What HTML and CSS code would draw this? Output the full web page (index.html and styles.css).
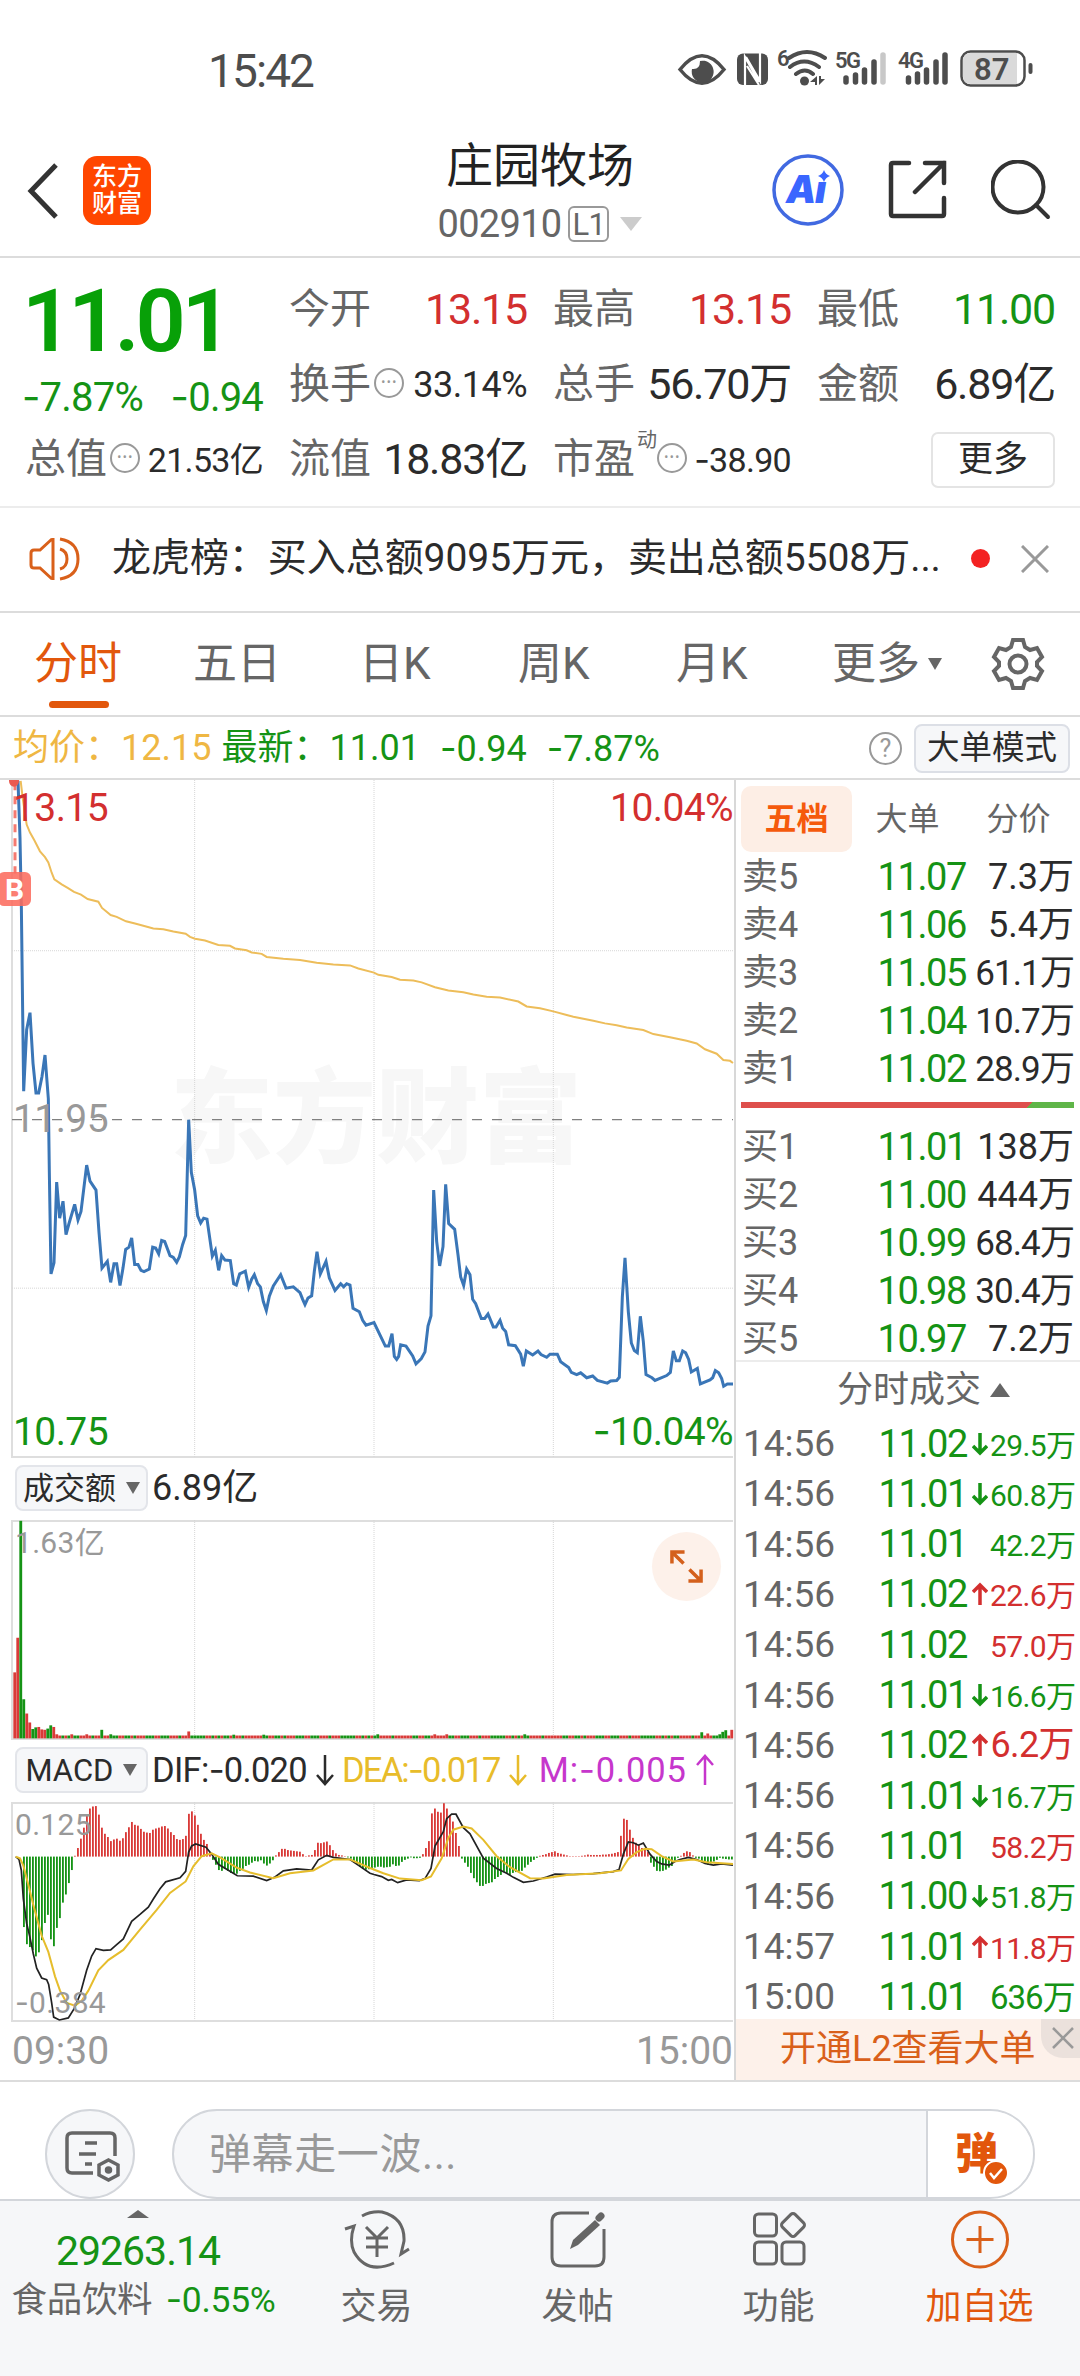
FILE: index.html
```
<!DOCTYPE html>
<html lang="zh-CN">
<head>
  <meta charset="UTF-8">
  <meta name="viewport" content="width=device-width, initial-scale=1.0">
  <title>庄园牧场 002910</title>
  <link rel="stylesheet" href="styles.css">
</head>
<body>
  <!-- Status bar -->
  <div class="status-bar">
    <span class="clock">15:42</span>
    <svg class="status-icons" viewBox="0 0 360 44">
      <path d="M5 21.500Q27 -6 49 21.500Q27 49 5 21.500Z" fill="none" stroke="#4d4d4d" stroke-width="3.500"/>
      <path d="M25 13a11 11 0 1 1-8 8q8 1 8-8Z" fill="#4d4d4d"/>
      <rect x="62" y="5.500" width="31" height="31.500" rx="6" fill="#4d4d4d"/>
      <path d="M70 37V9l14 25M85 5v28L71 9M72 18l12 19" fill="none" stroke="#fff" stroke-width="2.200"/>
      <text x="102" y="18" class="tiny">6</text>
      <path d="M114 10q18-12 36 0M115 19q14-11 29 0M121 26q9-7 17 0" fill="none" stroke="#4d4d4d" stroke-width="4" stroke-linecap="round"/>
      <circle cx="129.500" cy="33" r="4.500" fill="#4d4d4d"/>
      <path d="M135 34l7-6v9h-2v-3zM150 31l-6 6v-9h2v3z" fill="#4d4d4d"/>
      <text x="160" y="20" class="tiny">5G</text>
      <path d="M171 30v4M180.500 27v7M189.500 22v12M199 14v20" class="bars"/>
      <path d="M208 7v27" class="bars off"/>
      <text x="223" y="20" class="tiny">4G</text>
      <path d="M233.500 30v4M242.500 26v8M251.500 22v12M261 14v20M270 7v27" class="bars"/>
      <rect x="286.500" y="3.500" width="63" height="34" rx="9" fill="#fff" stroke="#4d4d4d" stroke-width="2.500"/>
      <path d="M296 5h46v31h-46q-8 0-8-8V13q0-8 8-8Z" fill="#dadada"/>
      <path d="M355.500 17v7" stroke="#4d4d4d" stroke-width="4" stroke-linecap="round"/>
      <text x="299" y="32" class="battery">87</text>
    </svg>
  </div>

  <!-- Header -->
  <header class="header">
    <div class="header-left">
      <svg class="back" viewBox="0 0 32 56"><path d="M29 2L4 28L29 54"/></svg>
      <div class="logo">东方<br>财富</div>
    </div>
    <div class="header-title">
      <h1>庄园牧场</h1>
      <div class="code">002910<span class="level">L1</span><i class="tri-down"></i></div>
    </div>
    <div class="header-right">
      <svg class="ai" viewBox="0 0 72 72">
        <circle cx="36" cy="36" r="34" fill="none" stroke="#4169e1" stroke-width="3.500"/>
        <text x="14" y="49">A</text>
        <text x="43" y="49">ı</text>
        <path d="M52 16q1.500 4.500 6 6q-4.500 1.500-6 6q-1.500-4.500-6-6q4.500-1.500 6-6Z" fill="#3a66ff"/>
      </svg>
      <svg class="share" viewBox="0 0 60 60"><path d="M21 3H5Q3 3 3 5V54Q3 56 5 56H54Q56 56 56 54V38M37 3H56V23M56 3L27 32"/></svg>
      <svg class="search" viewBox="0 0 60 60"><circle cx="27" cy="27" r="25.500"/><path d="M45 45L57 57"/></svg>
    </div>
  </header>

  <!-- Quote summary -->
  <section class="quote">
    <div class="quote-col">
      <div class="price">11.01</div>
      <div class="change"><span><i class="neg">-</i>7.87%</span><span><i class="neg">-</i>0.94</span></div>
      <div class="stat"><label>总值</label><i class="dots">•••</i><b class="small">21.53亿</b></div>
    </div>
    <div class="quote-col">
      <div class="stat"><label>今开</label><b class="red">13.15</b></div>
      <div class="stat"><label>换手</label><i class="dots">•••</i><b class="mid">33.14%</b></div>
      <div class="stat"><label>流值</label><b>18.83亿</b></div>
    </div>
    <div class="quote-col">
      <div class="stat"><label>最高</label><b class="red">13.15</b></div>
      <div class="stat"><label>总手</label><b>56.70万</b></div>
      <div class="stat"><label>市盈</label><sup>动</sup><i class="dots">•••</i><b class="small"><i class="neg">-</i>38.90</b></div>
    </div>
    <div class="quote-col">
      <div class="stat"><label>最低</label><b class="green">11.00</b></div>
      <div class="stat"><label>金额</label><b>6.89亿</b></div>
      <div class="stat"><button class="more-btn">更多</button></div>
    </div>
  </section>

  <!-- News line -->
  <section class="news">
    <svg class="speaker" viewBox="0 0 52 46"><path d="M24 2v42M23 3L11 14H5Q2 14 2 17v12q0 3 3 3h6l12 11M31 13q7 2 7 10t-7 10M31 3q18 3 18 20t-18 20"/></svg>
    <span class="news-text">龙虎榜：买入总额9095万元，卖出总额5508万...</span>
    <i class="red-dot"></i>
    <svg class="news-close" viewBox="0 0 28 28"><path d="M1 1l26 26M27 1L1 27"/></svg>
  </section>

  <!-- Period tabs -->
  <nav class="tabs">
    <a class="tab active">分时</a>
    <a class="tab">五日</a>
    <a class="tab">日K</a>
    <a class="tab">周K</a>
    <a class="tab">月K</a>
    <a class="tab more">更多<i class="tri-down"></i></a>
    <svg class="gear" viewBox="0 0 54 54">
      <path d="M22 3h10l2 7 5 3 7-2 5 9-5 5v4l5 5-5 9-7-2-5 3-2 7H22l-2-7-5-3-7 2-5-9 5-5v-4l-5-5 5-9 7 2 5-3Z"/>
      <circle cx="27" cy="27" r="8.500"/>
    </svg>
  </nav>

  <div class="info-row">
    <span class="avg">均价：12.15</span>
    <span class="last">最新：11.01</span>
    <span class="last"><i class="neg">-</i>0.94</span>
    <span class="last"><i class="neg">-</i>7.87%</span>
    <i class="help">?</i>
    <button class="mode-btn">大单模式</button>
  </div>

  <main class="main">
    <div class="charts">
      <!-- Price chart -->
      <div class="chart price-chart">
        <div class="watermark">东方财富</div>
        <svg viewBox="0 20 2202 1521" preserveAspectRatio="none">
          <path class="grid" d="M36 403H2199M36 1160H2199M584 20V1540M1122 20V1540M1660 20V1540"/>
          <path class="prev-close" d="M36 782H2199"/>
          <path class="buy-line" d="M45 25V230"/>
          <polyline class="avg-line" points="62,22 68,60 80,120 90,138 103,155 120,180 135,193 145,205 155,228 163,243 185,254 203,262 222,271 243,277 263,287 295,293 306,307 332,323 350,327 378,337 405,342 430,347 460,353 490,355 520,360 557,365 570,372 585,376 615,380 655,390 690,392 705,398 740,402 755,407 785,410 800,417 850,421 900,424 950,430 1000,434 1050,436 1075,443 1122,452 1135,457 1175,462 1200,468 1240,470 1265,474 1305,485 1345,492 1390,496 1420,501 1460,506 1500,508 1555,517 1580,528 1620,532 1660,539 1700,547 1720,551 1780,560 1815,566 1850,570 1880,575 1930,581 1960,590 2010,597 2060,605 2090,611 2115,624 2150,634 2170,648 2190,650 2199,655"/>
          <polyline class="price-line" points="54,22 60,150 64,300 71,718 80,580 90,542 99,655 108,722 116,722 126,685 135,637 145,735 148,900 153,1128 162,1103 170,922 179,1003 189,965 198,1040 207,1015 224,972 234,1007 243,988 260,884 270,920 288,940 297,1035 306,1115 322,1100 332,1147 342,1105 350,1105 360,1154 369,1115 377,1073 387,1068 395,1047 404,1107 414,1107 423,1120 432,1123 448,1117 458,1068 467,1070 476,1083 485,1053 494,1055 510,1087 520,1091 530,1102 538,1090 548,1062 557,1042 566,782 574,900 584,940 593,998 602,1014 611,1003 621,1005 637,1088 646,1075 656,1120 665,1087 675,1097 691,1098 701,1150 709,1153 719,1128 736,1122 746,1158 755,1140 763,1130 773,1150 781,1157 790,1190 799,1210 808,1178 820,1155 842,1130 858,1160 880,1157 900,1170 908,1185 915,1197 924,1182 935,1177 943,1122 951,1078 961,1128 978,1100 988,1137 1005,1165 1022,1150 1031,1157 1040,1150 1050,1153 1059,1205 1078,1213 1088,1232 1098,1243 1122,1237 1138,1262 1156,1290 1166,1290 1176,1262 1183,1313 1190,1320 1196,1313 1202,1287 1218,1290 1238,1312 1248,1330 1264,1318 1275,1303 1284,1245 1293,1222 1301,940 1310,1055 1319,1110 1329,1067 1337,927 1346,1015 1364,1028 1374,1085 1382,1135 1391,1154 1400,1117 1410,1130 1418,1185 1427,1195 1444,1228 1454,1228 1464,1218 1480,1247 1488,1247 1500,1232 1508,1250 1517,1257 1526,1287 1546,1289 1562,1308 1570,1335 1579,1301 1598,1310 1614,1301 1623,1309 1640,1315 1650,1308 1672,1308 1682,1325 1706,1338 1714,1349 1730,1354 1742,1350 1760,1361 1778,1357 1792,1367 1822,1373 1832,1368 1850,1367 1858,1360 1867,1180 1875,1092 1885,1213 1894,1283 1903,1300 1912,1305 1921,1223 1930,1280 1938,1354 1956,1361 1965,1367 2000,1356 2011,1349 2020,1301 2029,1323 2038,1323 2048,1301 2057,1305 2066,1320 2074,1348 2092,1340 2101,1375 2130,1366 2138,1361 2146,1345 2156,1350 2165,1363 2171,1380 2182,1375 2199,1375"/>
          <ellipse cx="42" cy="22" rx="15" ry="13" fill="#ea5a50"/>
        </svg>
        <span class="buy-mark">B</span>
        <span class="axis high red">13.15</span>
        <span class="axis high right red">10.04%</span>
        <span class="axis middle">11.95</span>
        <span class="axis low green">10.75</span>
        <span class="axis low right green"><i class="neg">-</i>10.04%</span>
      </div>

      <div class="indicator">
        <button class="chip">成交额<i class="tri-down"></i></button>
        <span class="turnover">6.89亿</span>
      </div>

      <!-- Turnover bars -->
      <div class="chart sub-chart">
        <svg viewBox="0 172 2202 540" preserveAspectRatio="none">
          <path class="grid" d="M584 172V708M1122 172V708M1660 172V708"/>
          <g id="volume"></g>
        </svg>
        <span class="sub-axis sub-high">1.63亿</span>
        <div class="expand">
          <svg viewBox="0 0 34 34"><path d="M2 14V2H15M2 2L14 14M32 20V32H19M32 32L20 20"/></svg>
        </div>
      </div>

      <div class="indicator">
        <button class="chip">MACD<i class="tri-down"></i></button>
        <span class="dif">DIF:<i class="neg">-</i>0.020<svg class="arrow" viewBox="0 0 18 32"><path d="M9 1v29M1 21l8 9 8-9"/></svg></span>
        <span class="dea">DEA:<i class="neg">-</i>0.017<svg class="arrow" viewBox="0 0 18 32"><path d="M9 1v29M1 21l8 9 8-9"/></svg></span>
        <span class="macd">M:<i class="neg">-</i>0.005<svg class="arrow" viewBox="0 0 18 32"><path d="M9 31V2M1 11l8-9 8 9"/></svg></span>
      </div>

      <!-- MACD -->
      <div class="chart sub-chart">
        <svg viewBox="0 862 2202 540" preserveAspectRatio="none">
          <path class="grid" d="M584 862V1398M1122 862V1398M1660 862V1398"/>
          <g id="macd"></g>
          <polyline class="dif-line" points="47,996 57,1003 64,1030 70,1100 80,1160 90,1195 100,1235 110,1270 125,1294 140,1298 146,1310 155,1355 161,1390 178,1397 205,1392 222,1370 240,1335 260,1275 275,1240 288,1222 310,1226 332,1225 350,1212 370,1198 395,1155 420,1138 445,1120 460,1100 480,1075 497,1058 540,1048 557,1032 566,985 575,970 587,965 618,973 635,990 655,1015 690,1032 712,1043 760,1044 800,1055 825,1046 850,1031 890,1026 935,1029 955,1004 980,993 1000,998 1050,1003 1080,1020 1110,1037 1122,1040 1145,1045 1165,1054 1175,1052 1193,1060 1220,1053 1258,1055 1275,1050 1293,1025 1305,970 1330,935 1340,903 1355,892 1368,892 1390,925 1410,940 1450,1000 1490,1025 1520,1037 1540,1047 1570,1059 1600,1056 1640,1046 1665,1039 1720,1040 1780,1038 1840,1033 1857,1028 1870,990 1885,960 1900,962 1915,968 1930,963 1950,990 1970,1008 1985,1014 2008,1017 2025,1008 2040,1003 2065,998 2090,1003 2115,1013 2140,1017 2165,1014 2199,1017"/>
          <polyline class="dea-line" points="47,996 60,1000 70,1018 85,1065 100,1115 125,1190 145,1230 165,1290 180,1325 200,1355 225,1362 245,1350 265,1325 295,1275 325,1250 370,1225 420,1175 470,1127 510,1085 557,1057 580,1020 605,995 635,988 660,998 710,1023 750,1035 820,1049 870,1037 940,1030 1000,1003 1050,1003 1110,1024 1150,1037 1200,1050 1265,1054 1293,1045 1325,1000 1345,950 1360,930 1390,922 1415,927 1450,955 1490,995 1530,1022 1590,1049 1630,1050 1700,1041 1800,1037 1863,1030 1885,1002 1910,985 1935,977 1955,978 1985,995 2020,1008 2080,1003 2120,1010 2199,1014"/>
        </svg>
        <span class="sub-axis sub-high">0.125</span>
        <span class="sub-axis sub-low"><i class="neg">-</i>0.384</span>
      </div>
      <div class="time-axis"><span>09:30</span><span>15:00</span></div>
    </div>

    <!-- Order book -->
    <aside class="side">
      <div class="side-tabs"><a class="active">五档</a><a>大单</a><a>分价</a></div>
      <div class="book">
        <div class="row"><span>卖5</span><em>11.07</em><b>7.3万</b></div>
        <div class="row"><span>卖4</span><em>11.06</em><b>5.4万</b></div>
        <div class="row"><span>卖3</span><em>11.05</em><b class="long">61.1万</b></div>
        <div class="row"><span>卖2</span><em>11.04</em><b class="long">10.7万</b></div>
        <div class="row"><span>卖1</span><em>11.02</em><b class="long">28.9万</b></div>
      </div>
      <div class="ratio"></div>
      <div class="book">
        <div class="row"><span>买1</span><em>11.01</em><b>138万</b></div>
        <div class="row"><span>买2</span><em>11.00</em><b>444万</b></div>
        <div class="row"><span>买3</span><em>10.99</em><b class="long">68.4万</b></div>
        <div class="row"><span>买4</span><em>10.98</em><b class="long">30.4万</b></div>
        <div class="row"><span>买5</span><em>10.97</em><b>7.2万</b></div>
      </div>
      <div class="ticks-title">分时成交<i class="tri-up"></i></div>
      <div class="ticks" id="ticks"></div>
      <div class="promo">开通L2查看大单
        <span class="promo-close"><svg viewBox="0 0 22 22"><path d="M1 1l20 20M21 1L1 21"/></svg></span>
      </div>
    </aside>
  </main>

  <!-- Comment bar -->
  <div class="comment">
    <div class="comment-set">
      <svg viewBox="0 0 56 52">
        <path d="M50 25V7Q50 2 45 2H7Q2 2 2 7V37Q2 42 7 42H28M20 12h12M14 23h17M20 33h7"/>
        <path d="M43.500 29l9.500 5v10l-9.500 5-9.500-5V34Z"/><circle cx="43.500" cy="39" r="2" fill="#666"/>
      </svg>
    </div>
    <div class="comment-input">
      <span class="placeholder">弹幕走一波...</span>
      <span class="danmu">弹<svg viewBox="0 0 26 26"><circle cx="13" cy="13" r="12" fill="#e2570c" stroke="#fff" stroke-width="2"/><path d="M7 13l4 5 8-9" fill="none" stroke="#fff" stroke-width="2.500"/></svg></span>
    </div>
  </div>

  <!-- Bottom nav -->
  <footer class="bottom">
    <div class="index">
      <i class="tri-up"></i>
      <div class="index-value">29263.14</div>
      <div class="index-name"><span>食品饮料</span><span class="green"><i class="neg">-</i>0.55%</span></div>
    </div>
    <a class="nav-item">
      <svg viewBox="0 0 66 62"><path d="M18 7Q27 2 38 3Q61 9 60 32L57 45L65 40M1 20L10 17Q5 32 10 43Q23 66 50 54"/><path d="M22 18l11 11 11-11M33 29v19M22 29h22M22 38h22"/></svg>
      交易
    </a>
    <a class="nav-item">
      <svg viewBox="0 0 66 62"><path d="M44 4H16Q7 4 7 13V48Q7 57 16 57H50Q59 57 59 48V20"/><path d="M25 40l3-9 22-20 5 5-22 20Z" fill="#666" stroke="none"/><path d="M54 9l2-2" stroke-width="7" stroke-linecap="round"/></svg>
      发帖
    </a>
    <a class="nav-item">
      <svg viewBox="0 0 66 62"><rect x="8.500" y="5" width="22" height="22" rx="4"/><rect x="8.500" y="33" width="22" height="22" rx="4"/><rect x="36" y="33" width="22" height="22" rx="4"/><rect x="38" y="7" width="18" height="18" rx="3" transform="rotate(45 47 16)"/></svg>
      功能
    </a>
    <a class="nav-item add">
      <svg viewBox="0 0 66 62"><circle cx="33" cy="30.500" r="27.500"/><path d="M33 17v27M19.500 30.500h27"/></svg>
      加自选
    </a>
  </footer>
  <script src="script.js"></script>
</body>
</html>
```
FILE: styles.css
```
* {
  box-sizing: border-box;
}

body {
  margin: 0;
  width: 1080px;
  height: 2376px;
  overflow: hidden;
  background: #fff;
  color: #2b2b2b;
  font-family: Roboto, "Noto Sans CJK SC", sans-serif;
  line-height: 1;
}

button {
  font-family: inherit;
  color: inherit;
  padding: 0;
  line-height: 1;
}

i, em {
  font-style: normal;
}

b {
  font-weight: 400;
}

svg {
  display: block;
  flex: none;
}

.red {
  color: #d32f2f;
}

.green {
  color: #159315;
}

/* wider minus sign */
.neg {
  font-family: Inter, sans-serif;
}

.tri-down, .tri-up {
  display: inline-block;
  border: 7px solid transparent;
}

.tri-down {
  border-top: 12px solid #666;
  border-bottom: 0;
}

.tri-up {
  border-bottom: 12px solid #666;
  border-top: 0;
}

/* Status bar */
.status-bar {
  display: flex;
  justify-content: space-between;
  height: 132px;
  padding: 48px 45px 0 208px;
}

.clock {
  font-size: 46px;
  letter-spacing: -1.9px;
  color: #4d4d4d;
}

.status-icons {
  width: 360px;
  height: 44px;
}

.tiny {
  font-size: 22px;
  font-weight: 600;
  fill: #4d4d4d;
  letter-spacing: -1.5px;
}

.battery {
  font-size: 31px;
  font-weight: 600;
  fill: #4d4d4d;
}

.bars {
  stroke: #4d4d4d;
  stroke-width: 5.5;
  stroke-linecap: round;
}

.bars.off {
  stroke: #c8c8c8;
}

/* Header */
.header {
  display: grid;
  grid-template-columns: 300px 1fr 300px;
  height: 126px;
  border-bottom: 2px solid #dcdcdc;
}

.header-left {
  display: flex;
  align-items: center;
  padding: 0 0 7px 27px;
  gap: 24px;
}

.back {
  width: 32px;
  height: 56px;
  fill: none;
  stroke: #333;
  stroke-width: 5;
}

.logo {
  width: 68px;
  height: 69px;
  padding-top: 7px;
  border-radius: 14px;
  background: #ff4600;
  color: #fff;
  font-size: 25px;
  font-weight: 500;
  line-height: 27px;
  text-align: center;
}

.header-title {
  display: flex;
  flex-direction: column;
  align-items: center;
}

.header-title h1 {
  margin: 9px 0 14px;
  font-size: 47px;
  line-height: 50px;
  font-weight: 400;
  color: #222;
}

.code {
  display: flex;
  align-items: center;
  font-size: 38px;
  letter-spacing: -0.7px;
  color: #666;
}

.level {
  width: 41px;
  height: 36px;
  margin: 0 11px 0 7px;
  border: 2px solid #999;
  border-radius: 6px;
  font-size: 31px;
  line-height: 33px;
  text-align: center;
}

.code .tri-down {
  border-width: 14px 11px 0;
  border-top-color: #ccc;
}

.header-right {
  display: flex;
  align-items: center;
  padding: 0 0 8px;
}

.ai {
  width: 72px;
  height: 72px;
  margin: 0 44px 0 -8px;
}

.ai text {
  font-family: Inter;
  font-size: 38px;
  font-weight: 900;
  font-style: italic;
  fill: #3a66ff;
}

.share, .search {
  width: 60px;
  height: 60px;
  fill: none;
  stroke: #333;
  stroke-width: 4.5;
  stroke-linecap: round;
}

.share {
  margin-right: 43px;
}

.search {
  stroke-width: 4;
}

/* Quote summary */
.quote {
  display: grid;
  grid-template-columns: repeat(4, 238px);
  gap: 26px;
  height: 250px;
  padding: 14px 25px 0;
  border-bottom: 2px solid #ececec;
}

.price {
  height: 100px;
  margin-left: -3px;
  color: #08a008;
  font-size: 88px;
  line-height: 98px;
  font-weight: 600;
  letter-spacing: -4px;
}

.change {
  display: flex;
  justify-content: space-between;
  height: 50px;
  margin-left: -3px;
  color: #159315;
  font-size: 40px;
  line-height: 50px;
  letter-spacing: -0.8px;
}

.stat {
  display: flex;
  align-items: center;
  height: 75px;
  white-space: nowrap;
}

.stat label {
  font-size: 41px;
  color: #666;
}

.stat b {
  margin-left: auto;
  font-size: 43px;
  letter-spacing: -1.2px;
}

.stat .mid {
  font-size: 36px;
  letter-spacing: -0.5px;
}

.stat .small {
  font-size: 34px;
  letter-spacing: -0.7px;
}

.stat sup {
  align-self: flex-start;
  margin: 8px 0 0 2px;
  font-size: 20px;
  color: #666;
}

.dots {
  width: 30px;
  height: 30px;
  margin: -4px 0 0 3px;
  border: 2px solid #999;
  border-radius: 50%;
  color: #999;
  font-size: 12px;
  line-height: 25px;
  letter-spacing: 1.5px;
  text-indent: 1px;
  text-align: center;
}

.stat sup + .dots {
  margin-left: 0;
}

.more-btn {
  width: 124px;
  height: 56px;
  margin-left: auto;
  border: 2px solid #e4e4e4;
  border-radius: 7px;
  background: #fff;
  font-size: 35px;
}

/* News */
.news {
  display: flex;
  align-items: center;
  height: 105px;
  padding: 0 31px 2px 29px;
  border-bottom: 2px solid #dcdcdc;
}

.speaker {
  width: 52px;
  height: 46px;
  fill: none;
  stroke: #d9601a;
  stroke-width: 3;
}

.news-text {
  width: 828px;
  margin-left: 31px;
  font-size: 39px;
  letter-spacing: -0.05px;
  white-space: nowrap;
}

.red-dot {
  width: 19px;
  height: 19px;
  margin-left: 31px;
  border-radius: 50%;
  background: #f32222;
}

.news-close {
  width: 28px;
  height: 28px;
  margin-left: auto;
  stroke: #999;
  stroke-width: 3;
}

/* Tabs */
.tabs {
  display: grid;
  grid-template-columns: 159px 166px 159px 158px 156px 1fr 54px;
  align-items: center;
  height: 104px;
  padding: 0 35px 0 34px;
  border-bottom: 2px solid #dcdcdc;
  font-size: 44px;
  color: #666;
}

.tab {
  position: relative;
  line-height: 102px;
}

.tab.active {
  color: #e2570c;
}

.tab.active::after {
  content: "";
  position: absolute;
  left: 15px;
  bottom: 7px;
  width: 60px;
  height: 7px;
  border-radius: 4px;
  background: #e2570c;
}

.tab.more {
  display: flex;
  align-items: center;
}

.tab .tri-down {
  margin-left: 8px;
}

.gear {
  width: 54px;
  height: 54px;
  fill: none;
  stroke: #666;
  stroke-width: 4;
}

/* Average / last price */
.info-row {
  display: flex;
  align-items: center;
  height: 61px;
  padding: 1px 10px 0 13px;
  font-size: 36px;
  letter-spacing: 0;
  white-space: nowrap;
}

.info-row span {
  margin-right: 20px;
}

.avg {
  color: #efb743;
}

.info-row .avg {
  margin-right: 10px;
}

.last {
  color: #159315;
}

.help {
  width: 33px;
  height: 33px;
  margin: 0 12px 0 auto;
  border: 2.5px solid #999;
  border-radius: 50%;
  font-size: 25px;
  line-height: 29px;
  text-align: center;
  color: #999;
}

.mode-btn {
  width: 156px;
  height: 49px;
  border: 2px solid #dcdfe6;
  border-radius: 8px;
  background: #f6f7f9;
  font-size: 32.5px;
}

/* Main */
.main {
  display: flex;
  height: 1304px;
  border-top: 2px solid #dcdcdc;
  border-bottom: 2px solid #dcdcdc;
}

.charts {
  width: 736px;
  border-right: 2px solid #d8d8d8;
}

.chart {
  position: relative;
}

.chart svg {
  position: relative;
  width: 734px;
  height: 100%;
}

.chart::before {
  content: "";
  position: absolute;
  inset: 0 1px 0 11px;
  border: 2px solid #dedede;
  border-right: 0;
}

.price-chart {
  height: 678px;
}

.price-chart::before {
  border-top: 0;
}

.sub-chart {
  height: 220px;
}

.chart polyline, .chart path {
  fill: none;
  vector-effect: non-scaling-stroke;
}

.chart .grid {
  stroke: #d6d6d6;
  stroke-width: 1;
  stroke-dasharray: 1 1;
}

.chart .prev-close {
  stroke: #808080;
  stroke-width: 1.4;
  stroke-dasharray: 10 10;
}

.chart .buy-line {
  stroke: #f57a70;
  stroke-width: 3;
  stroke-dasharray: 8 6;
}

.chart .avg-line {
  stroke: #edbd5a;
  stroke-width: 2;
}

.chart .price-line {
  stroke: #3a76b7;
  stroke-width: 3;
}

.chart .dif-line {
  stroke: #222;
  stroke-width: 1.7;
}

.chart .dea-line {
  stroke: #e6bd2c;
  stroke-width: 2;
}

.watermark {
  position: absolute;
  top: 288px;
  left: 170px;
  color: #f7f7f7;
  font-size: 103px;
  font-weight: 900;
}

.buy-mark {
  position: absolute;
  top: 92px;
  left: -2px;
  width: 33px;
  height: 34px;
  border-radius: 6px;
  background: rgba(252, 108, 94, 0.88);
  color: #fff;
  font-size: 30px;
  font-weight: 700;
  line-height: 35px;
  text-align: center;
}

.axis {
  position: absolute;
  left: 13px;
  font-size: 39px;
  letter-spacing: -0.6px;
}

.axis.right {
  left: auto;
  right: 1px;
}

.axis.high {
  top: 9px;
}

.axis.middle {
  top: 320px;
  color: #999;
}

.axis.low {
  bottom: 6px;
}

.sub-axis {
  position: absolute;
  left: 15px;
  font-size: 30px;
  letter-spacing: 0.3px;
  color: #999;
}

.sub-high {
  top: 8px;
}

.sub-low {
  bottom: 4px;
}

.expand {
  position: absolute;
  top: 12px;
  right: 13px;
  width: 69px;
  height: 69px;
  padding: 18px;
  border-radius: 50%;
  background: #fdf1ea;
}

.expand svg {
  width: 33px;
  height: 33px;
  stroke: #d4601c;
  stroke-width: 3.5;
}

.indicator {
  display: flex;
  align-items: center;
  height: 62px;
  padding: 0 0 2px 15px;
  font-size: 34.5px;
  white-space: nowrap;
}

.turnover {
  font-size: 36px;
}

.chip {
  display: flex;
  align-items: center;
  justify-content: center;
  gap: 10px;
  width: 133px;
  height: 46px;
  margin-right: 4px;
  border: 2px solid #e3e5ea;
  border-radius: 8px;
  background: #f6f7f9;
  font-size: 31px;
}

.indicator span {
  display: flex;
  align-items: center;
}

.arrow {
  width: 18px;
  height: 32px;
  margin-left: 9px;
  fill: none;
  stroke: currentColor;
  stroke-width: 2.5;
}

.dif {
  letter-spacing: -0.7px;
}

.dea {
  margin-left: 8px;
  color: #e8bc2a;
  letter-spacing: -1.8px;
}

.macd {
  margin-left: 12px;
  color: #c636cc;
  letter-spacing: 0.9px;
}

.time-axis {
  display: flex;
  justify-content: space-between;
  padding: 10px 1px 0 12px;
  font-size: 39px;
  color: #999;
}

/* Side panel */
.side {
  display: flex;
  flex-direction: column;
  width: 344px;
}

.side-tabs {
  display: flex;
  height: 75px;
  padding: 6px 0 0 5px;
  font-size: 32px;
  line-height: 66px;
  color: #666;
}

.side-tabs a {
  width: 111px;
  text-align: center;
}

.side-tabs .active {
  border-radius: 10px;
  height: 66px;
  background: #fdeee5;
  color: #f55a0c;
  font-weight: 700;
}

.row {
  display: grid;
  grid-template-columns: 89px 135px 1fr;
  align-items: center;
  height: 48px;
  padding: 0 6px 0 6px;
  font-size: 36px;
}

.row span {
  color: #666;
}

.row em {
  color: #159315;
  font-size: 38px;
  letter-spacing: -1.4px;
  text-align: right;
}

.row b {
  text-align: right;
  white-space: nowrap;
}

.row .long {
  font-size: 35px;
  letter-spacing: -0.9px;
}

.ratio {
  height: 6px;
  margin: 9px 6px 15px 5px;
  background: linear-gradient(135deg, #de4f4c 86%, #5fb548 86%);
}

.ticks-title {
  display: flex;
  align-items: center;
  justify-content: center;
  gap: 9px;
  height: 60px;
  margin-top: -3px;
  padding-left: 31px;
  border-top: 2px solid #ececec;
  font-size: 36px;
  color: #666;
}

.ticks-title .tri-up {
  border-width: 0 10px 14px;
}

.tick {
  display: grid;
  grid-template-columns: 89px 135px 23px 1fr;
  align-items: center;
  height: 50.3px;
  padding: 0 6px 0 7px;
  font-size: 37px;
}

.tick span {
  color: #666;
}

.tick em {
  color: #159315;
  font-size: 38px;
  letter-spacing: -1.4px;
  text-align: right;
}

.tick svg {
  width: 16px;
  height: 24px;
  margin-left: 5px;
  fill: none;
  stroke: currentColor;
  stroke-width: 3.5;
}

.tick b {
  grid-column: 4;
  justify-self: end;
  padding-top: 4px;
  font-size: 30px;
  letter-spacing: -0.6px;
  white-space: nowrap;
}

.tick .big {
  padding-top: 0;
  font-size: 36px;
}

.tick .medium {
  padding-top: 2px;
  font-size: 33px;
  letter-spacing: -1px;
}

.promo {
  position: relative;
  flex: 1;
  margin-top: -3px;
  padding-left: 44px;
  background: #fdf1ea;
  color: #d9601a;
  font-size: 36px;
  line-height: 61px;
}

.promo-close {
  position: absolute;
  top: 0;
  right: 0;
  width: 39px;
  height: 39px;
  padding: 8px 0 0 11px;
  border-bottom-left-radius: 22px;
  background: #ebe1dc;
}

.promo-close svg {
  width: 22px;
  height: 22px;
  stroke: #999;
  stroke-width: 2.5;
}

/* Comment bar */
.comment {
  display: flex;
  gap: 37px;
  height: 117px;
  padding: 27px 45px 0;
}

.comment-set {
  width: 90px;
  height: 90px;
  padding: 20px 0 0 18px;
  border: 2px solid #d3d6db;
  border-radius: 50%;
  background: #f6f7f9;
}

.comment-set svg {
  width: 56px;
  height: 52px;
  fill: none;
  stroke: #666;
  stroke-width: 3.5;
}

.comment-input {
  display: flex;
  justify-content: space-between;
  flex: 1;
  height: 90px;
  border: 2px solid #d3d6db;
  border-radius: 45px;
  background: #f6f7f9;
  overflow: hidden;
}

.placeholder {
  padding-left: 35px;
  font-size: 42px;
  line-height: 88px;
  color: #999;
  letter-spacing: 0.6px;
}

.danmu {
  position: relative;
  width: 107px;
  padding-left: 27px;
  border-left: 2px solid #d3d6db;
  background: #fff;
  color: #e2570c;
  font-size: 43px;
  font-weight: 900;
  line-height: 86px;
}

.danmu svg {
  position: absolute;
  left: 55px;
  top: 49px;
  width: 26px;
  height: 26px;
}

/* Bottom nav */
.bottom {
  display: flex;
  height: 177px;
  border-top: 2px solid #d3d6db;
  background: #f6f7f9;
}

.index {
  display: flex;
  flex-direction: column;
  align-items: center;
  width: 276px;
  padding-top: 9px;
}

.index .tri-up {
  border-width: 0 11px 8px;
}

.index-value {
  margin: 13px 0 10px;
  color: #159315;
  font-size: 41px;
  letter-spacing: -1px;
}

.index-name {
  display: flex;
  align-items: center;
  justify-content: space-between;
  width: 264px;
  margin-left: 11px;
  font-size: 35.5px;
  color: #666;
  white-space: nowrap;
  letter-spacing: -0.3px;
}

.nav-item {
  display: flex;
  flex-direction: column;
  align-items: center;
  gap: 18px;
  width: 201px;
  padding-top: 8px;
  font-size: 36px;
  color: #666;
}

.nav-item svg {
  width: 66px;
  height: 62px;
  fill: none;
  stroke: #666;
  stroke-width: 3;
}

.nav-item.add {
  color: #e2570c;
}

.nav-item.add svg {
  stroke: #d9601a;
}
```
FILE: script.js
```
const RED = '#d93a38';
const GREEN = '#159315';
const ZERO = 996;

function bar(x, y, width, height, color) {
  return `<rect x="${x}" y="${y}" width="${width}" height="${height}" fill="${color}"/>`;
}

// MACD histogram, one y value per minute, zero line at 996
const macd = [
  1168, 1210, 1217, 1225, 1240, 1230, 1200, 1158, 1138, 1198, 1215, 1170, 1146, 1108, 1088, 1060, 1028, 994,
  975, 952, 925, 893, 878, 873, 872, 893, 925, 940, 948, 958, 954, 952, 957, 951, 936, 924, 911, 918, 920, 928,
  935, 937, 938, 930, 927, 925, 922, 921, 927, 936, 943, 953, 955, 953, 945, 891, 885, 895, 918, 940, 955, 965,
  985, 1003, 1015, 1028, 1030, 1025, 1030, 1035, 1037, 1037, 1030, 1025, 1018, 1015, 1010, 1006, 1007, 1004,
  1012, 1017, 1012, 1004, 993, 985, 977, 977, 980, 981, 982, 983, 984, 990, 995, 993, 992, 980, 962, 963, 961,
  959, 968, 980, 988, 992, 993, 995, 997, 1000, 1006, 1014, 1020, 1025, 1027, 1026, 1024, 1022, 1020, 1020,
  1022, 1021, 1020, 1014, 1018, 1017, 1008, 1003, 1000, 997, 999, 999, 998, 990, 975, 958, 890, 878, 886, 888,
  865, 878, 895, 910, 938, 970, 1000, 1010, 1020, 1035, 1048, 1058, 1067, 1067, 1062, 1060, 1058, 1050, 1045,
  1040, 1033, 1035, 1040, 1035, 1033, 1032, 1030, 1022, 1015, 1008, 1003, 998, 994, 992, 990, 987, 985, 983,
  987, 989, 991, 993, 995, 995, 995, 995, 994, 993, 991, 992, 992, 992, 992, 991, 991, 990, 989, 987, 985, 945,
  903, 906, 930, 950, 962, 967, 975, 975, 985, 1010, 1020, 1030, 1031, 1030, 1027, 1022, 1018, 1005, 998, 994,
  987, 983, 985, 993, 998, 1000, 1008, 1010, 1015, 1012, 1007, 1003, 998, 1000, 1001, 1002, 1002, 1002
];

document.getElementById('macd').innerHTML = macd.map((y, i) => {
  const x = 69 + i * 9;
  return y < ZERO ? bar(x, y, 5.5, ZERO - y, RED) : bar(x, ZERO, 5.5, y - ZERO + 1, GREEN);
}).join('');

// Turnover: opening minutes and later spikes, everything else is a flat strip
const opening = [
  [546, 'r'], [461, 'r'], [174, 'g'], [612, 'g'], [647, 'r'], [669, 'r'], [685, 'g'], [681, 'g'],
  [680, 'r'], [686, 'r'], [687, 'r'], [684, 'g'], [676, 'g'], [680, 'r'], [698, 'r']
];
const spikes = {
  19: [698, 'r'], 24: [698, 'r'], 29: [687, 'g'], 32: [698, 'g'], 58: [691, 'r'], 73: [699, 'g'], 83: [699, 'g'],
  121: [698, 'g'], 140: [698, 'r'], 144: [698, 'r'], 170: [698, 'g'], 229: [693, 'g'], 231: [696, 'r'],
  235: [698, 'g'], 236: [692, 'g'], 237: [688, 'g'], 238: [701, 'r'], 239: [687, 'r']
};
const pattern = 'ggrrrgrrrgggggrrgrgrggrrrrgrrrrrrggrrggrgrrrgggrrg';

let volume = '';
for (let i = 0; i < 240; i++) {
  const [y, c] = opening[i] || spikes[i] || [701, pattern[i % pattern.length]];
  volume += bar(40 + i * 9, y, 8.5, 708 - y, c === 'r' ? RED : GREEN);
}
document.getElementById('volume').innerHTML = volume;

// Time and sales: time, price, direction, amount, color, size
const ticks = [
  ['14:56', '11.02', 'down', '29.5万', 'green'],
  ['14:56', '11.01', 'down', '60.8万', 'green'],
  ['14:56', '11.01', '', '42.2万', 'green'],
  ['14:56', '11.02', 'up', '22.6万', 'red'],
  ['14:56', '11.02', '', '57.0万', 'red'],
  ['14:56', '11.01', 'down', '16.6万', 'green'],
  ['14:56', '11.02', 'up', '6.2万', 'red', 'big'],
  ['14:56', '11.01', 'down', '16.7万', 'green'],
  ['14:56', '11.01', '', '58.2万', 'red'],
  ['14:56', '11.00', 'down', '51.8万', 'green'],
  ['14:57', '11.01', 'up', '11.8万', 'red'],
  ['15:00', '11.01', '', '636万', 'green', 'medium']
];
const arrows = {
  down: '<svg class="green" viewBox="0 0 16 24"><path d="M8 1v20M1 14l7 7 7-7"/></svg>',
  up: '<svg class="red" viewBox="0 0 16 24"><path d="M8 23V3M1 10l7-7 7 7"/></svg>'
};

document.getElementById('ticks').innerHTML = ticks.map(([time, price, dir, amount, color, size = '']) => `
  <div class="tick">
    <span>${time}</span><em>${price}</em>${arrows[dir] || ''}
    <b class="${color} ${size}">${amount}</b>
  </div>`).join('');
```
